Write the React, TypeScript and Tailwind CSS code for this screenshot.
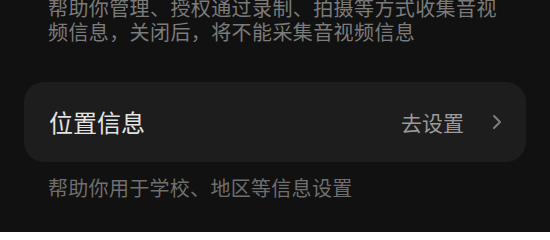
import React from 'react';

const FONT = "font-['Noto_Sans_CJK_SC','Noto_Sans',sans-serif]";

function ChevronRight() {
  return (
    <svg width="10" height="16" viewBox="0 0 10 16" fill="none" className="shrink-0">
      <path d="M2 2l6 6-6 6" stroke="#7f7f7f" strokeWidth="2" strokeLinecap="round" strokeLinejoin="round" />
    </svg>
  );
}

export default function App() {
  return (
    <div className={`w-[550px] h-[232px] overflow-hidden bg-[#111111] ${FONT}`}>
      <p className="mt-[-4px] pl-12 pr-12 text-[20px] leading-[24px] tracking-[0.4px] text-[#7b7b7b]">
        帮助你管理、授权通过录制、拍摄等方式收集音视频信息，关闭后，将不能采集音视频信息
      </p>
      <div className="mx-6 mt-[38px] h-[80px] rounded-[20px] bg-[#1d1d1d] flex items-center pl-[25px] pr-[24px]">
        <span className="text-[24px] leading-[28px] text-[#e4e4e4]">位置信息</span>
        <span className="ml-auto text-[21px] leading-[28px] text-[#9b9b9b]">去设置</span>
        <span className="ml-[28px] flex items-center">
          <ChevronRight />
        </span>
      </div>
      <p className="mt-[14px] pl-12 text-[20px] leading-[24px] tracking-[0.3px] text-[#6f6f6f]">
        帮助你用于学校、地区等信息设置
      </p>
    </div>
  );
}
